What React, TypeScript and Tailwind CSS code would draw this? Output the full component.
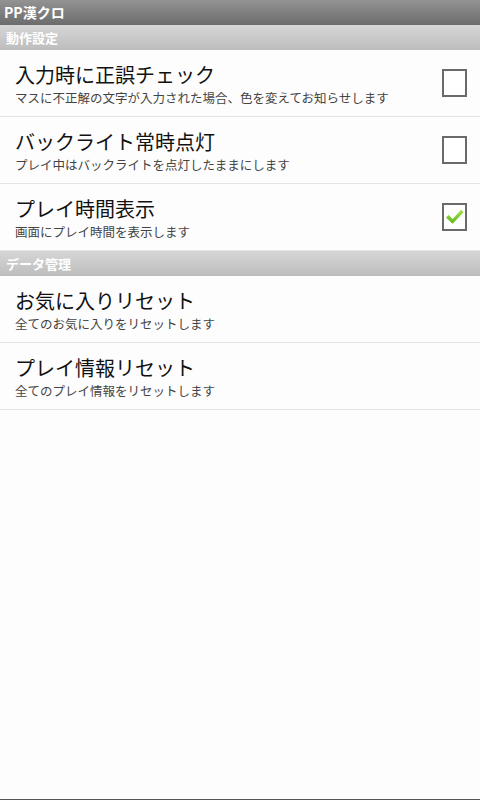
const font = { fontFamily: '"Noto Sans CJK JP", "DejaVu Sans", sans-serif' };

type Item = { title: string; desc: string; checked?: boolean };

const Check = ({ on }: { on: boolean }) => (
  <div className="w-[25px] h-[28px] border-2 border-[#6a6a6a] bg-white flex items-center justify-center">
    {on && (
      <svg width="22" height="20" viewBox="0 0 22 20">
        <defs>
          <linearGradient id="g" x1="0" y1="0" x2="0" y2="1">
            <stop offset="0" stopColor="#a8e04a" />
            <stop offset="1" stopColor="#5fb81c" />
          </linearGradient>
        </defs>
        <path d="M2 10.5 L5 8 L9 12 L18 2.5 L20.5 5 L9 17 Z" fill="url(#g)" />
      </svg>
    )}
  </div>
);

const Row = ({ item, box }: { item: Item; box: boolean }) => (
  <div className="h-[67px] flex items-center border-b border-[#e4e4e4] pl-[15px] pr-[13px]">
    <div className="flex-1 flex flex-col">
      <div className="text-[20px] leading-[29px] text-[#111]">{item.title}</div>
      <div className="text-[12.5px] leading-[18px] text-[#444]">{item.desc}</div>
    </div>
    {box && <Check on={!!item.checked} />}
  </div>
);

const Header = ({ label }: { label: string }) => (
  <div className="h-[25px] flex items-center px-[6px] bg-gradient-to-b from-[#d6d6d6] to-[#bdbdbd] text-white text-[13px] font-bold">
    {label}
  </div>
);

export default function App() {
  const behavior: Item[] = [
    { title: "入力時に正誤チェック", desc: "マスに不正解の文字が入力された場合、色を変えてお知らせします" },
    { title: "バックライト常時点灯", desc: "プレイ中はバックライトを点灯したままにします" },
    { title: "プレイ時間表示", desc: "画面にプレイ時間を表示します", checked: true },
  ];
  const data: Item[] = [
    { title: "お気に入りリセット", desc: "全てのお気に入りをリセットします" },
    { title: "プレイ情報リセット", desc: "全てのプレイ情報をリセットします" },
  ];
  return (
    <div className="w-[480px] h-[800px] bg-[#fdfdfd] flex flex-col border-b border-[#555]" style={font}>
      <div className="h-[25px] flex items-center px-[4px] bg-gradient-to-b from-[#939393] to-[#6c6c6c] text-white text-[14px] font-bold">
        PP漢クロ
      </div>
      <Header label="動作設定" />
      {behavior.map((it) => (
        <Row key={it.title} item={it} box />
      ))}
      <Header label="データ管理" />
      {data.map((it) => (
        <Row key={it.title} item={it} box={false} />
      ))}
    </div>
  );
}
